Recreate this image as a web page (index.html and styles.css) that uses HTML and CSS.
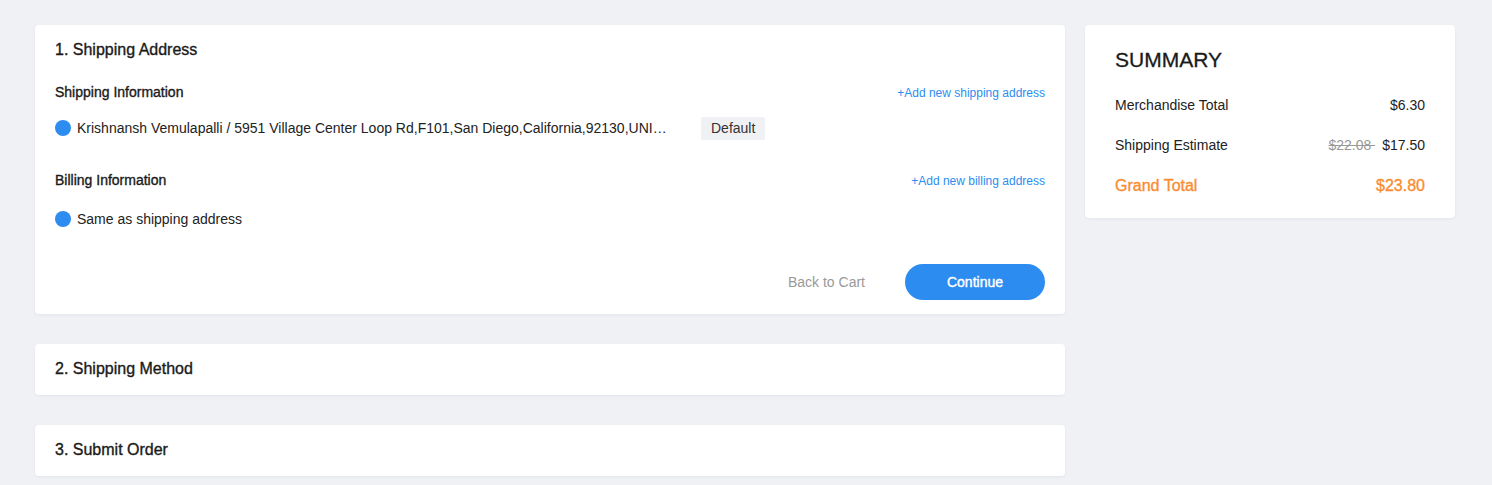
FILE: index.html
```html
<!DOCTYPE html>
<html lang="en">
<head>
<meta charset="utf-8">
<title>Checkout</title>
<link rel="stylesheet" href="styles.css">
</head>
<body>
<div class="page">
  <main class="steps">
    <section class="card step-open">
      <h2 class="step-title">1. Shipping Address</h2>
      <div class="section-head">
        <span class="section-label">Shipping Information</span>
        <a class="add-link" href="#">+Add new shipping address</a>
      </div>
      <div class="option-row">
        <span class="radio"></span>
        <span class="address">Krishnansh Vemulapalli / 5951 Village Center Loop Rd,F101,San Diego,California,92130,UNI…</span>
        <span class="badge">Default</span>
      </div>
      <div class="section-head billing">
        <span class="section-label">Billing Information</span>
        <a class="add-link" href="#">+Add new billing address</a>
      </div>
      <div class="option-row same">
        <span class="radio"></span>
        <span class="option-text">Same as shipping address</span>
      </div>
      <div class="actions">
        <a class="back-link" href="#">Back to Cart</a>
        <button class="continue-btn" type="button">Continue</button>
      </div>
    </section>
    <section class="card step-closed">
      <h2 class="step-title">2. Shipping Method</h2>
    </section>
    <section class="card step-closed">
      <h2 class="step-title">3. Submit Order</h2>
    </section>
  </main>
  <aside class="card summary">
    <h2 class="summary-title">SUMMARY</h2>
    <div class="summary-row">
      <span>Merchandise Total</span>
      <span>$6.30</span>
    </div>
    <div class="summary-row">
      <span>Shipping Estimate</span>
      <span><del class="old-price">$22.08&nbsp;</del>$17.50</span>
    </div>
    <div class="summary-row grand">
      <span>Grand Total</span>
      <span>$23.80</span>
    </div>
  </aside>
</div>
</body>
</html>
```

FILE: styles.css
```css
* { box-sizing: border-box; }

html, body {
  margin: 0;
  padding: 0;
  background: #f0f1f5;
  font-family: "Liberation Sans", Arial, sans-serif;
  color: #1f1f1f;
}

.page {
  display: flex;
  align-items: flex-start;
  gap: 20px;
  padding: 25px 35px;
}

.steps {
  width: 1030px;
  display: flex;
  flex-direction: column;
  gap: 30px;
}

.card {
  background: #fff;
  border-radius: 4px;
  box-shadow: 0 1px 3px rgba(20, 30, 60, 0.06);
}

.step-open {
  padding: 0 20px 14px;
}

.step-closed {
  padding: 0 20px;
}

.step-title {
  margin: 0;
  font-size: 16px;
  font-weight: normal;
  -webkit-text-stroke: 0.35px currentColor;
  line-height: 49px;
  height: 49px;
  color: #1a1a1a;
}

.step-closed .step-title {
  line-height: 49px;
  height: 51px;
}

.section-head {
  display: flex;
  justify-content: space-between;
  align-items: baseline;
  margin-top: 8px;
  line-height: 20px;
}

.section-head.billing {
  margin-top: 30px;
}

.section-label {
  font-size: 14px;
  -webkit-text-stroke: 0.35px currentColor;
  color: #1a1a1a;
}

.add-link {
  font-size: 12px;
  color: #2d8cf0;
  text-decoration: none;
}

.option-row {
  display: flex;
  align-items: center;
  height: 24px;
  margin-top: 13px;
  font-size: 14px;
  color: #222;
}

.option-row.same {
  margin-top: 16px;
}

.radio {
  width: 16px;
  height: 16px;
  border-radius: 50%;
  background: #2d8cf0;
  flex: none;
  margin-right: 6px;
}

.address {
  flex: none;
  width: 592px;
  white-space: nowrap;
}

.badge {
  margin-left: 32px;
  background: #f0f1f5;
  color: #333;
  border-radius: 2px;
  padding: 0 10px;
  height: 23px;
  line-height: 23px;
}

.actions {
  display: flex;
  justify-content: flex-end;
  align-items: center;
  gap: 40px;
  margin-top: 33px;
}

.back-link {
  font-size: 14px;
  color: #999;
  text-decoration: none;
}

.continue-btn {
  width: 140px;
  height: 36px;
  border: 0;
  border-radius: 18px;
  background: #2d8cf0;
  color: #fff;
  font-family: "Liberation Sans", Arial, sans-serif;
  font-size: 14px;
  -webkit-text-stroke: 0.4px currentColor;
  cursor: pointer;
}

.summary {
  width: 370px;
  padding: 20px 30px 22px;
}

.summary-title {
  margin: 0;
  font-size: 21px;
  font-weight: normal;
  -webkit-text-stroke: 0.3px currentColor;
  line-height: 30px;
  color: #1a1a1a;
}

.summary-row {
  display: flex;
  justify-content: space-between;
  line-height: 20px;
  margin-top: 20px;
  font-size: 14px;
  color: #222;
}

.old-price {
  color: #999;
  margin-right: 7px;
}

.summary-row.grand {
  margin-top: 21px;
  font-size: 16px;
  color: #fa8c2f;
  -webkit-text-stroke: 0.35px currentColor;
}
```
